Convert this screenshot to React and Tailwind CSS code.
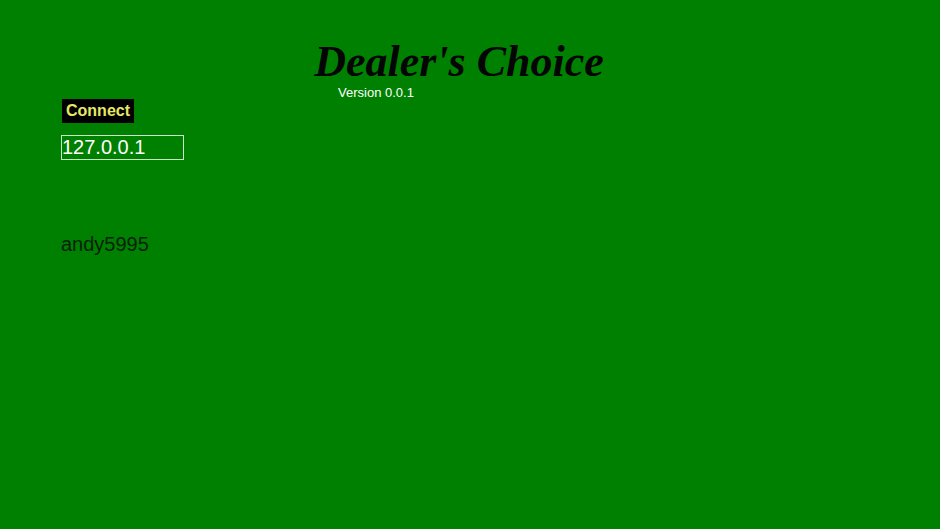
export default function App() {
  return (
    <div className="min-h-screen w-full bg-[#008000] font-['Liberation_Sans',Arial,sans-serif]">
      <div className="flex flex-col items-center pt-[40px]">
        <h1 className="ml-[-22px] font-['Liberation_Serif',serif] text-[44px] font-bold italic leading-[44px] text-[#050505]">
          Dealer&apos;s Choice
        </h1>
      </div>
      <div className="pl-[61px]">
        <div className="ml-[277px] mt-[1px] text-[13px] leading-[15px] text-white">Version 0.0.1</div>
        <div className="mt-[-1px]">
          <button className="ml-px bg-black px-[4px] py-[3px] text-[16px] font-bold leading-[18px] text-[#e8e864]">
            Connect
          </button>
        </div>
        <div className="mt-[12px]">
          <input
            defaultValue="127.0.0.1"
            className="h-[25px] w-[123px] border border-[#c8e6c8] bg-transparent px-0 text-[20px] leading-[23px] text-white outline-none"
          />
        </div>
        <div className="mt-[72px] text-[20px] leading-[23px] text-[#0a1f0a]">andy5995</div>
      </div>
    </div>
  );
}
